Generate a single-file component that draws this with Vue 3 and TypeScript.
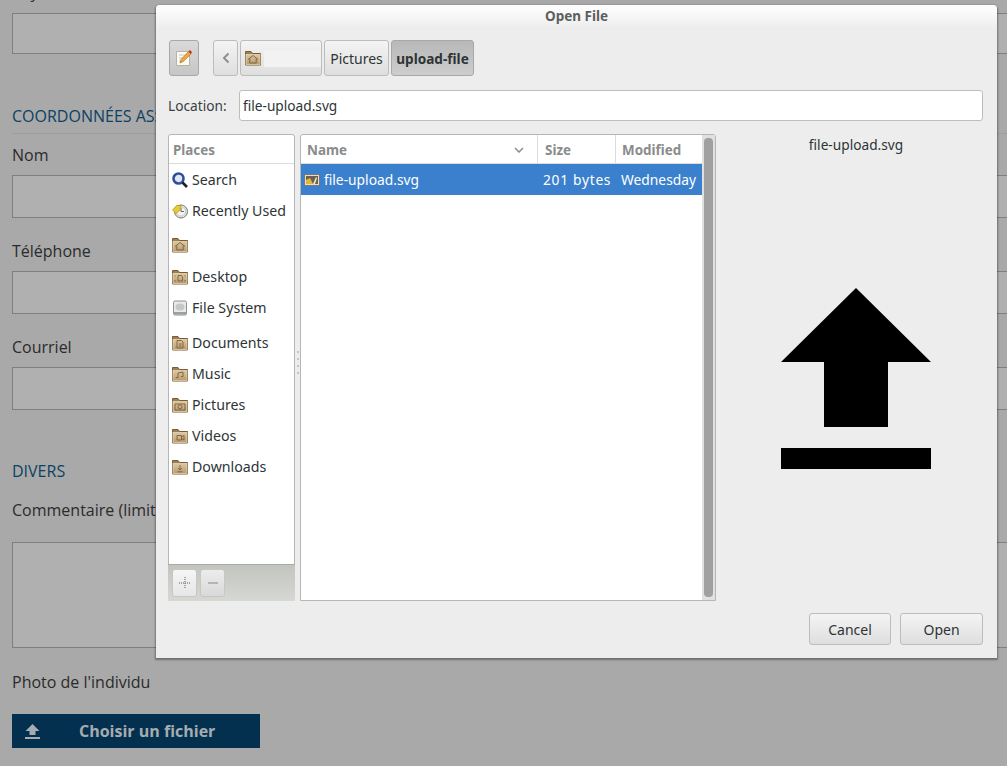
<template>
  <div class="page">
    <!-- form behind the dialog -->
    <form class="form">
      <label class="label cut">Pays <span class="req">***</span></label>
      <div class="input first" />
      <h2 class="section">COORDONNÉES ASSISTANT</h2>
      <label class="label nom">Nom</label>
      <div class="input" />
      <label class="label tel">Téléphone</label>
      <div class="input tall" />
      <label class="label tel">Courriel</label>
      <div class="input tall" />
      <h2 class="section divers">DIVERS</h2>
      <label class="label comment">Commentaire (limité à 500 caractères)</label>
      <div class="textarea" />
      <label class="label photo">Photo de l'individu</label>
      <button type="button" class="upload">
        <svg class="upload-icon" viewBox="0 0 15 16" width="15" height="16">
          <path d="M7.5 1 14.5 8H10.5V12H4.5V8H.5Z" fill="#a6acb0" />
          <rect y="14" width="15" height="2" fill="#a6acb0" />
        </svg>
        <span>Choisir un fichier</span>
      </button>
    </form>

    <svg class="defs" width="0" height="0">
      <defs>
        <linearGradient id="folderFill" x1="0" y1="0" x2="0" y2="1">
          <stop offset="0" stop-color="#dcc8a6" />
          <stop offset="1" stop-color="#b89a6c" />
        </linearGradient>
        <symbol id="folder" viewBox="0 0 16 16">
          <path d="M.5 15V1.500h5.500l1.500 2h8V15Z" fill="#9c7f54" stroke="#7a5c34" />
          <rect x="1" y="4.500" width="14" height="10" fill="url(#folderFill)" stroke="#eadcc0" stroke-width=".7" />
        </symbol>
      </defs>
    </svg>

    <!-- file chooser -->
    <section class="dialog">
      <header class="titlebar">Open File</header>

      <div class="toolbar">
        <button type="button" class="tool edit">
          <svg viewBox="0 0 18 18" width="18" height="18">
            <path d="M1.500 2.500h13v14h-13Z" fill="#fbfaf5" stroke="#b5b2a8" />
            <path d="M4 6h7M4 9h5M4 12h4" stroke="#c9c6bc" />
            <path d="M5 14 6 10.500 13.500 2.500 16 5 8 12.800Z" fill="#eda83a" stroke="#a8701f" stroke-width=".6" />
            <path d="M13.500 2.500 15 1 17 3.200 16 5Z" fill="#cf2a2a" />
          </svg>
        </button>
        <div class="crumbs">
          <button type="button" class="tool back">
            <svg viewBox="0 0 8 12" width="8" height="12">
              <path d="M6.500 1.500 2 6l4.500 4.500" fill="none" stroke="#8b8f90" stroke-width="2" />
            </svg>
          </button>
          <button type="button" class="tool home">
            <svg class="icon" viewBox="0 0 16 16">
              <use href="#folder" />
              <path d="M3 9.500 8 5.500 13 9.500M4.800 8.500V13H11.200V8.500" fill="none" stroke="#7c6038" stroke-width=".9" />
            </svg>
            <span class="blur" />
          </button>
          <button type="button" class="tool crumb">Pictures</button>
          <button type="button" class="tool crumb current">upload-file</button>
        </div>
      </div>

      <div class="location">
        <span class="loc-label">Location:</span>
        <div class="loc-entry">file-upload.svg</div>
      </div>

      <div class="body">
        <aside class="places">
          <div class="col-head places-head">Places</div>
          <ul class="place-list">
            <li v-for="p in places" :key="p.id" class="place" :class="p.spacing">
              <svg class="icon" viewBox="0 0 16 16">
                <template v-if="p.id === 'search'">
                  <circle cx="6.500" cy="6.500" r="5" fill="#dfe8f5" stroke="#2f4f9e" stroke-width="2.600" />
                  <path d="M10.500 10.500 15 15" stroke="#222" stroke-width="2.600" />
                </template>
                <template v-else-if="p.id === 'recent'">
                  <circle cx="9" cy="8.500" r="6.500" fill="#e4e4de" stroke="#77776f" />
                  <circle cx="9" cy="8.500" r="4.500" fill="#f4f4f0" stroke="#b5b5ad" stroke-width=".6" />
                  <path d="M9 5V8.500H12" fill="none" stroke="#666" />
                  <path d="M.5 7 4.500 2.500 9 2.500 8 7 4 10.500Z" fill="#ecc92e" stroke="#a98b13" stroke-width=".6" />
                </template>
                <template v-else-if="p.id === 'fs'">
                  <rect x="1.500" y="1" width="13" height="14" rx="1.500" fill="#e8eae8" stroke="#8f9290" />
                  <ellipse cx="8" cy="7" rx="4.500" ry="3.500" fill="#c4c8c6" />
                  <rect x="2" y="12" width="12" height="2.500" fill="#9da09e" />
                </template>
                <template v-else>
                  <use href="#folder" />
                  <path :d="p.glyph" fill="none" stroke="#7c6038" stroke-width=".9" />
                </template>
              </svg>
              <span>{{ p.name }}</span>
            </li>
          </ul>
          <div class="places-actions">
            <button type="button" class="mini">
              <svg viewBox="0 0 12 12" width="12" height="12">
                <path d="M0 6h12M6 0v12" stroke="#8a8a8a" stroke-width="1.500" stroke-dasharray="1 1" />
              </svg>
            </button>
            <button type="button" class="mini off">
              <span class="minus" />
            </button>
          </div>
        </aside>

        <div class="grip"><i v-for="n in 4" :key="n" /></div>

        <div class="files">
          <div class="file-head">
            <div class="col-head col-name">
              Name
              <svg viewBox="0 0 10 6" width="10" height="6">
                <path d="M1 1 5 5 9 1" fill="none" stroke="#8c8c8c" stroke-width="1.500" />
              </svg>
            </div>
            <div class="col-head col-size">Size</div>
            <div class="col-head col-mod">Modified</div>
          </div>
          <div class="file-row">
            <span class="col-name-cell">
              <svg class="icon thumb" viewBox="0 0 16 16">
                <rect x=".5" y="2.500" width="15" height="11" fill="#e2dfd2" stroke="#777" />
                <rect x="2" y="4" width="12" height="8" fill="#6a624c" />
                <path d="M2 12 2 8 6 6 9 12Z" fill="#e6b43c" />
                <path d="M9 12 12 5 13 6 11 12Z" fill="#efe7c8" />
              </svg>
              file-upload.svg
            </span>
            <span class="col-size-cell">201 bytes</span>
            <span class="col-mod-cell">Wednesday</span>
          </div>
          <div class="scrollbar"><div class="thumb-bar" /></div>
        </div>

        <div class="preview">
          <div class="preview-name">file-upload.svg</div>
          <svg class="preview-img" viewBox="0 0 150 181" width="150" height="181">
            <path d="M75 0 150 74H107V139H43V74H0Z" fill="#000" />
            <rect y="160" width="150" height="21" fill="#000" />
          </svg>
        </div>
      </div>

      <footer class="actions">
        <button type="button" class="tool action cancel">Cancel</button>
        <button type="button" class="tool action">Open</button>
      </footer>
    </section>
  </div>
</template>

<script setup lang="ts">
interface Place {
  id: string
  name: string
  glyph?: string
  spacing?: string
}

const places: Place[] = [
  { id: 'search', name: 'Search' },
  { id: 'recent', name: 'Recently Used' },
  { id: 'home', name: '', spacing: 'gap', glyph: 'M3 9.500 8 5.500 13 9.500M4.800 8.500V13H11.200V8.500' },
  { id: 'desktop', name: 'Desktop', spacing: 'nudge', glyph: 'M3 6.500V7.500M3 11V12.500M13 6.500V7.500M13 11V12.500M6 6.500H9.500L10.500 8V12H6Z' },
  { id: 'fs', name: 'File System' },
  { id: 'documents', name: 'Documents', spacing: 'gap-wide', glyph: 'M5 5.500H9.500L11 7V13H5ZM7 9H9.500M7 11H9.500' },
  { id: 'music', name: 'Music', glyph: 'M6 11.500V7L11 6V10.500M6 11.500H4M11 10.500H9' },
  { id: 'pictures', name: 'Pictures', glyph: 'M3 7H13V13H3ZM8 7.800A2 2 0 1 0 8 11.800 2 2 0 1 0 8 7.800' },
  { id: 'videos', name: 'Videos', glyph: 'M5 7.500H9.500V12H5ZM9.500 9 12 7.500V12L9.500 10.500' },
  { id: 'downloads', name: 'Downloads', glyph: 'M8 6V11M6 9 8 11 10 9M5.500 12.800H10.500' },
]
</script>

<style>
html,
body {
  margin: 0;
  overflow: hidden;
  background: #a9a9a9;
}
</style>

<style scoped>
.page {
  position: relative;
  width: 1007px;
  height: 766px;
  overflow: hidden;
  background: #a9a9a9;
  font-family: "Open Sans", sans-serif;
}

/* form behind the dialog */
.form {
  width: 1060px;
  padding: 0 0 0 12px;
  display: flex;
  flex-direction: column;
  align-items: flex-start;
  color: #2b2b2b;
  font-size: 16px;
}

.label {
  display: block;
  line-height: 22px;
}

.cut {
  margin-top: -19px;
  height: 22px;
}

.req {
  color: #b01010;
  font-size: 12px;
}

.input {
  width: 100%;
  height: 41px;
  box-sizing: border-box;
  border: 1px solid #7f7f7f;
  background: #b0b0b0;
}

.input.first {
  margin-top: 10px;
}

.input.tall {
  height: 43px;
}

.section {
  width: 100%;
  margin: 51px 0 0;
  padding-bottom: 6px;
  border-bottom: 1px solid #9e9e9e;
  color: #0c4163;
  font-size: 16px;
  font-weight: 400;
  line-height: 22px;
}

.section.divers {
  margin-top: 50px;
  border-bottom: none;
}

.nom {
  margin-top: 10px;
}

.label.nom + .input {
  height: 43px;
  margin-top: 9px;
}

.tel {
  margin-top: 22px;
}

.label.tel + .input {
  margin-top: 9px;
}

.comment {
  margin-top: 11px;
}

.textarea {
  width: 100%;
  height: 106px;
  margin-top: 21px;
  box-sizing: border-box;
  border: 1px solid #7f7f7f;
  background: #b0b0b0;
}

.photo {
  margin-top: 23px;
}

.upload {
  width: 248px;
  height: 34px;
  margin-top: 21px;
  padding: 0 0 0 13px;
  display: flex;
  align-items: center;
  border: none;
  background: #03304f;
  color: #a6acb0;
  font-family: inherit;
  font-size: 16px;
  font-weight: 700;
}

.upload span {
  margin-left: 39px;
}

.defs {
  position: absolute;
}

/* dialog */
.dialog {
  position: absolute;
  left: 156px;
  top: 5px;
  width: 841px;
  height: 653px;
  box-sizing: border-box;
  padding: 0 14px 0 12px;
  display: flex;
  flex-direction: column;
  background: #ededed;
  border-radius: 4px 4px 0 0;
  box-shadow: 0 1px 2px 1px rgba(0, 0, 0, 0.35);
  color: #2e3436;
  font-family: "Noto Sans", sans-serif;
  font-size: 14px;
}

.titlebar {
  height: 23px;
  margin: 0 -14px 0 -12px;
  background: linear-gradient(#ffffff, #ededed);
  border-radius: 4px 4px 0 0;
  text-align: center;
  color: #5c5f60;
  font-size: 13.5px;
  font-weight: 700;
  line-height: 23px;
}

.toolbar {
  margin: 12px 0 0 1px;
  display: flex;
  gap: 14px;
}

.crumbs {
  display: flex;
  gap: 2px;
}

.tool {
  box-sizing: border-box;
  height: 36px;
  padding: 0;
  display: flex;
  align-items: center;
  justify-content: center;
  border: 1px solid #bcbcbc;
  border-radius: 3px;
  background: linear-gradient(#f4f4f4, #dedede);
  color: #2e3436;
  font-family: inherit;
  font-size: 14px;
}

.edit {
  width: 30px;
  background: linear-gradient(#d9d9d9, #c6c6c6);
  border-color: #a8a8a8;
}

.back {
  width: 25px;
}

.home {
  width: 82px;
  justify-content: flex-start;
  padding-left: 4px;
}

.blur {
  width: 57px;
  height: 17px;
  margin-left: 3px;
  background: #f2f2f2;
}

.crumb {
  width: 65px;
}

.crumb.current {
  width: 83px;
  background: linear-gradient(#b8b8b8, #cdcdcd);
  border-color: #a8a8a8;
  font-size: 13.6px;
  font-weight: 700;
}

.icon {
  width: 16px;
  height: 16px;
  flex: none;
}

.location {
  margin-top: 14px;
  display: flex;
  align-items: center;
}

.loc-label {
  width: 71px;
  color: #3a3f41;
  font-size: 13.7px;
}

.loc-entry {
  width: 744px;
  height: 31px;
  box-sizing: border-box;
  padding-left: 3px;
  border: 1px solid #bdbdbd;
  border-radius: 3px;
  background: #fff;
  font-size: 13.7px;
  line-height: 29px;
}

.body {
  margin-top: 13px;
  height: 467px;
  display: flex;
}

.places {
  width: 127px;
  box-sizing: border-box;
  display: flex;
  flex-direction: column;
  border: 1px solid #b6b6b6;
  border-radius: 3px 3px 0 0;
  background: #fff;
}

.col-head {
  color: #8a8c8c;
  font-size: 13.4px;
  font-weight: 700;
}

.places-head {
  height: 29px;
  box-sizing: border-box;
  padding: 1px 0 0 4px;
  border-bottom: 1px solid #dcdcdc;
  line-height: 29px;
}

.place-list {
  flex: 1;
  margin: 0;
  padding: 0;
  list-style: none;
}

.place {
  height: 31px;
  padding-left: 3px;
  display: flex;
  align-items: center;
  gap: 4px;
  font-size: 14.2px;
  white-space: nowrap;
}

.place.gap {
  margin-top: 3px;
}

.place.nudge {
  margin-top: 1px;
}

.place.gap-wide {
  margin-top: 4px;
}

.places-actions {
  height: 37px;
  box-sizing: border-box;
  padding: 4px 0 0 4px;
  display: flex;
  gap: 3px;
  margin: 0 -1px -1px;
  border-top: 1px solid #a8aaa6;
  background: linear-gradient(#c2c4c0, #d6d8d4);
}

.mini {
  width: 25px;
  height: 28px;
  padding: 0;
  display: flex;
  align-items: center;
  justify-content: center;
  border: 1px solid #c6c8c4;
  border-radius: 3px;
  background: linear-gradient(#f5f5f5, #e6e6e6);
}

.mini.off {
  background: linear-gradient(#ececec, #d9d9d9);
}

.minus {
  width: 10px;
  height: 2px;
  background: #b4b4b4;
}

.grip {
  width: 5px;
  display: flex;
  flex-direction: column;
  align-items: center;
  justify-content: center;
  gap: 5px;
  padding-bottom: 11px;
}

.grip i {
  width: 2px;
  height: 2px;
  background: #c4c4c4;
}

.files {
  position: relative;
  width: 416px;
  box-sizing: border-box;
  border: 1px solid #b6b6b6;
  border-radius: 3px 3px 0 0;
  background: #fff;
}

.file-head {
  height: 29px;
  margin-right: 13px;
  display: flex;
  border-bottom: 1px solid #dcdcdc;
  box-sizing: border-box;
  line-height: 30px;
}

.col-name {
  width: 237px;
  box-sizing: border-box;
  padding: 1px 13px 0 6px;
  display: flex;
  align-items: center;
  justify-content: space-between;
  border-right: 1px solid #dcdcdc;
}

.col-size {
  width: 78px;
  box-sizing: border-box;
  padding-left: 7px;
  border-right: 1px solid #dcdcdc;
}

.col-mod {
  padding-left: 6px;
}

.file-row {
  position: relative;
  height: 31px;
  margin-right: 13px;
  display: flex;
  align-items: center;
  background: #3b80cc;
  color: #fff;
  font-size: 13.8px;
  white-space: nowrap;
}

.col-name-cell {
  width: 237px;
  display: flex;
  align-items: center;
  gap: 4px;
  padding-left: 3px;
  box-sizing: border-box;
}

.col-size-cell {
  width: 78px;
  padding-left: 5px;
  box-sizing: border-box;
  letter-spacing: 0.7px;
}

.col-mod-cell {
  padding-left: 5px;
}

.scrollbar {
  position: absolute;
  top: 0;
  right: 0;
  bottom: 0;
  width: 13px;
  box-sizing: border-box;
  padding: 3px 2px 3px 2px;
  background: #e0e0e0;
}

.thumb-bar {
  height: 100%;
  border-radius: 4px;
  background: #a0a0a0;
}

.preview {
  flex: 1;
  margin-right: -13px;
  display: flex;
  flex-direction: column;
  align-items: center;
}

.preview-name {
  margin-top: 1px;
  font-size: 13.7px;
  line-height: 20px;
}

.preview-img {
  margin-top: 133px;
}

.actions {
  margin-top: 12px;
  display: flex;
  justify-content: flex-end;
  gap: 9px;
}

.action {
  width: 83px;
  height: 32px;
}

.action.cancel {
  width: 82px;
}
</style>
